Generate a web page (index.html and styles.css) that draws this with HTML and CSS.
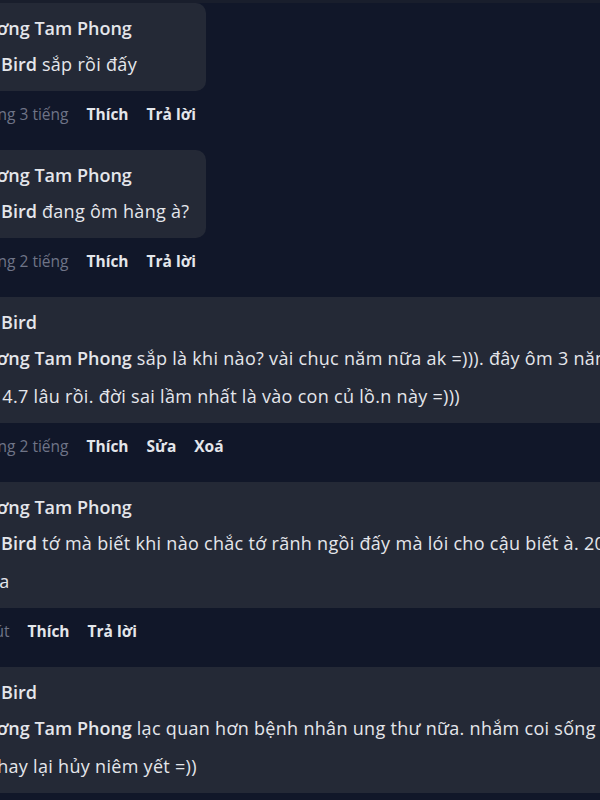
FILE: index.html
```html
<html>
  <head>
    <meta charset="utf-8">
    <link rel="stylesheet" href="styles.css">
  </head>
  <body>
    <div class="edge"></div>
    <div class="feed">

      <div class="comment">
        <div class="bubble">
          <div class="author">Trương Tam Phong</div>
          <div class="text"><b>Old Bird</b> sắp rồi đấy</div>
        </div>
        <div class="meta"><span class="time">khoảng 3 tiếng</span><a>Thích</a><a>Trả lời</a></div>
      </div>

      <div class="comment">
        <div class="bubble">
          <div class="author">Trương Tam Phong</div>
          <div class="text"><b>Old Bird</b> đang ôm hàng à?</div>
        </div>
        <div class="meta"><span class="time">khoảng 2 tiếng</span><a>Thích</a><a>Trả lời</a></div>
      </div>

      <div class="comment wide">
        <div class="bubble">
          <div class="author">Old Bird</div>
          <div class="text"><b>Trương Tam Phong</b> sắp là khi nào? vài chục năm nữa ak =))). đây ôm 3 năm nay rồi<br>còn 4.7 lâu rồi. đời sai lầm nhất là vào con củ lồ.n này =)))</div>
        </div>
        <div class="meta"><span class="time">khoảng 2 tiếng</span><a>Thích</a><a>Sửa</a><a>Xoá</a></div>
      </div>

      <div class="comment wide">
        <div class="bubble">
          <div class="author">Trương Tam Phong</div>
          <div class="text"><b>Old Bird</b> tớ mà biết khi nào chắc tớ rãnh ngồi đấy mà lói cho cậu biết à. 2025 thì<br>khứa</div>
        </div>
        <div class="meta"><span class="time">ít phút</span><a>Thích</a><a>Trả lời</a></div>
      </div>

      <div class="comment wide">
        <div class="bubble">
          <div class="author">Old Bird</div>
          <div class="text"><b>Trương Tam Phong</b> lạc quan hơn bệnh nhân ung thư nữa. nhắm coi sống được tới lúc<br>giờ hay lại hủy niêm yết =))</div>
        </div>
      </div>

    </div>
  </body>
</html>
```

FILE: styles.css
```css
html, body {
  margin: 0;
  background: #111729;
  overflow: hidden;
}

body {
  font-family: "Open Sans", "Noto Sans", sans-serif;
  color: #e4e6eb;
}

.edge {
  height: 3px;
  background: #191e2c;
}

.feed {
  margin-left: -46px;
}

.comment {
  margin-bottom: 17px;
}

.bubble {
  width: 228px;
  padding: 8px 12px;
  border-radius: 10px;
  background: #242936;
}

.author {
  font-size: 18px;
  font-weight: 600;
  line-height: 34px;
  white-space: nowrap;
}

.text {
  font-size: 18px;
  line-height: 38px;
  letter-spacing: 0.3px;
  white-space: nowrap;
}

.text b {
  font-weight: 600;
  letter-spacing: 0;
}

.meta {
  display: flex;
  gap: 18px;
  margin-top: 4px;
  padding-left: 8px;
  font-size: 15.5px;
  line-height: 38px;
}

.time {
  color: #6f7487;
}

.meta a {
  font-weight: 700;
  color: #e4e6eb;
}

/* long replies run past the window edge */
.wide .bubble {
  width: 900px;
}
```
